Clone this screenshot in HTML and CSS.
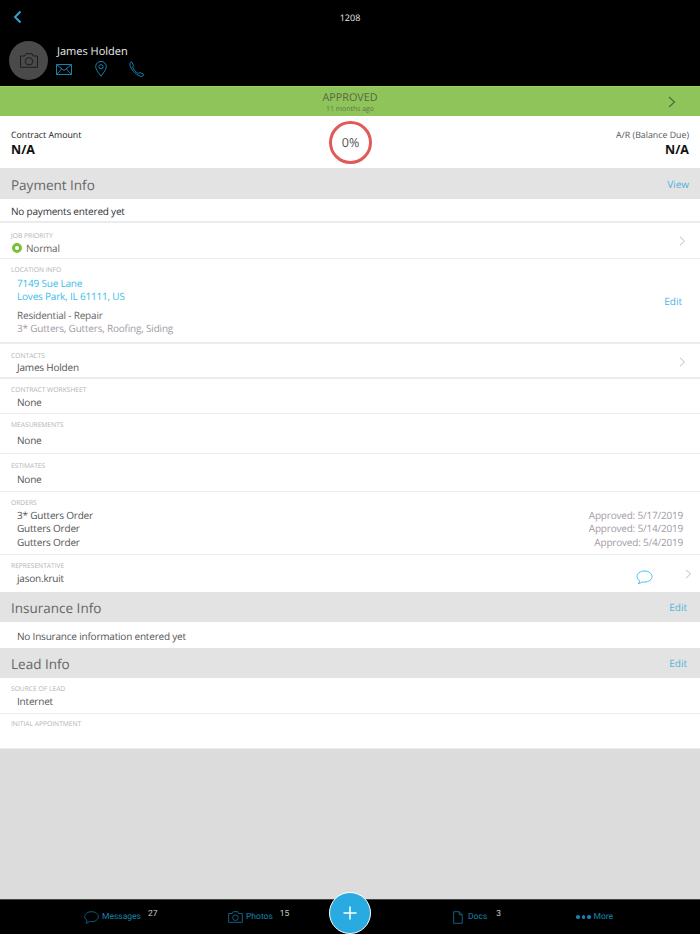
FILE: index.html
```html
<!DOCTYPE html>
<html lang="en">
<head>
<meta charset="utf-8">
<title>Job 1208</title>
<link rel="stylesheet" href="styles.css">
</head>
<body>
<div class="app">
  <header class="top">
    <div class="top-bar">
      <svg class="back" width="10" height="14" viewBox="0 0 10 14"><path d="M7.500 1.500 2 7l5.500 5.500" fill="none" stroke="#29abe2" stroke-width="1.800"/></svg>
      <span class="job-no">1208</span>
    </div>
    <div class="person">
      <div class="avatar">
        <svg width="20" height="15" viewBox="0 0 20 15"><path d="M1.500 3h4.200l1.300-2.300h6L14.300 3h4.200v11.300h-17z" fill="none" stroke="#1d1d1d" stroke-width="1"/><circle cx="10" cy="8.300" r="3.700" fill="none" stroke="#1d1d1d" stroke-width="1"/></svg>
      </div>
      <div class="person-info">
        <div class="person-name">James Holden</div>
        <div class="person-icons">
          <svg width="16" height="11" viewBox="0 0 16 11"><path d="M.5.500h15v10H.5zM.5.500 8 6.500l7.500-6M.5 10.500 5.800 4.800M15.500 10.500l-5.300-5.700" fill="none" stroke="#1b7fa8" stroke-width="1"/></svg>
          <svg width="12" height="16" viewBox="0 0 12 16"><path d="M6 15.300C3 11 .7 8.500.7 5.700a5.300 5.300 0 0 1 10.600 0C11.300 8.500 9 11 6 15.300z" fill="none" stroke="#1b7fa8" stroke-width="1"/><circle cx="6" cy="5.700" r="2.100" fill="none" stroke="#1b7fa8" stroke-width="1"/></svg>
          <svg width="16" height="16" viewBox="0 0 16 16"><path d="M2.500.700 4.600 4.500 3.600 6c.9 2.800 3 5 5.800 6.500l1.600-1 3.900 2-.9 1.300c-.6.700-1.700.8-3 .3C6 13 2 8.500.9 4 .6 2.800 1 1.600 2.500.700z" fill="none" stroke="#1b7fa8" stroke-width="1"/></svg>
        </div>
      </div>
    </div>
  </header>

  <section class="status">
    <div class="status-text">
      <div class="status-title">APPROVED</div>
      <div class="status-sub">11 months ago</div>
    </div>
    <svg class="status-chev" width="8" height="12" viewBox="0 0 8 12"><path d="M1 1l5.500 5L1 11" fill="none" stroke="#4f6b3a" stroke-width="1.200"/></svg>
  </section>

  <section class="summary">
    <div class="amount">
      <div class="amount-label">Contract Amount</div>
      <div class="amount-value">N/A</div>
    </div>
    <div class="ring">0%</div>
    <div class="amount amount-right">
      <div class="amount-label muted">A/R (Balance Due)</div>
      <div class="amount-value">N/A</div>
    </div>
  </section>

  <div class="band band-payment"><span class="band-title">Payment Info</span><a class="band-link">View</a></div>
  <div class="row row-nopay">No payments entered yet</div>

  <div class="row row-priority">
    <div class="label">JOB PRIORITY</div>
    <div class="priority"><span class="dot"></span>Normal</div>
    <svg class="chev" width="7" height="10" viewBox="0 0 7 10"><path d="M1 .8 5.500 5 1 9.200" fill="none" stroke="#bdbdbd" stroke-width="1"/></svg>
  </div>

  <div class="row row-location">
    <div class="label">LOCATION INFO</div>
    <div class="value value-link first">7149 Sue Lane</div>
    <div class="value value-link">Loves Park, IL 61111, US</div>
    <div class="value value-gap">Residential - Repair</div>
    <div class="value value-soft">3* Gutters, Gutters, Roofing, Siding</div>
    <a class="row-edit">Edit</a>
  </div>

  <div class="row row-contacts">
    <div class="label">CONTACTS</div>
    <div class="value">James Holden</div>
    <svg class="chev" width="7" height="10" viewBox="0 0 7 10"><path d="M1 .8 5.500 5 1 9.200" fill="none" stroke="#bdbdbd" stroke-width="1"/></svg>
  </div>

  <div class="row row-worksheet">
    <div class="label">CONTRACT WORKSHEET</div>
    <div class="value">None</div>
  </div>

  <div class="row row-measure">
    <div class="label">MEASUREMENTS</div>
    <div class="value">None</div>
  </div>

  <div class="row row-estimates">
    <div class="label">ESTIMATES</div>
    <div class="value">None</div>
  </div>

  <div class="row row-orders">
    <div class="label">ORDERS</div>
    <div class="order"><span class="value">3* Gutters Order</span><span class="order-date">Approved: 5/17/2019</span></div>
    <div class="order"><span class="value">Gutters Order</span><span class="order-date">Approved: 5/14/2019</span></div>
    <div class="order"><span class="value">Gutters Order</span><span class="order-date">Approved: 5/4/2019</span></div>
  </div>

  <div class="row row-rep">
    <div class="label">REPRESENTATIVE</div>
    <div class="value">jason.kruit</div>
    <svg class="rep-chat" width="17" height="15" viewBox="0 0 17 15"><path d="M8.500 1C4.300 1 1 3.400 1 6.500c0 1.700 1 3.200 2.600 4.200-.1 1-.6 2.300-1.300 3 1.500-.2 2.800-.8 3.800-1.800.8.200 1.600.2 2.400.2 4.200 0 7.500-2.500 7.500-5.600S12.700 1 8.500 1z" fill="none" stroke="#45bdea" stroke-width="1"/></svg>
    <svg class="chev chev-rep" width="7" height="10" viewBox="0 0 7 10"><path d="M1 .8 5.500 5 1 9.200" fill="none" stroke="#bdbdbd" stroke-width="1"/></svg>
  </div>

  <div class="band band-insurance"><span class="band-title">Insurance Info</span><a class="band-link link-edit">Edit</a></div>
  <div class="row row-noins"><span class="value">No Insurance information entered yet</span></div>

  <div class="band band-lead"><span class="band-title">Lead Info</span><a class="band-link link-edit">Edit</a></div>
  <div class="row row-source">
    <div class="label">SOURCE OF LEAD</div>
    <div class="value">Internet</div>
  </div>
  <div class="row row-appt">
    <div class="label">INITIAL APPOINTMENT</div>
  </div>

  <div class="filler"></div>

  <footer class="tabs">
    <div class="tab tab-messages">
      <svg width="15" height="13" viewBox="0 0 15 13"><path d="M7.500.700C3.700.700.700 2.900.700 5.600c0 1.500.9 2.800 2.300 3.700 0 1-.4 2.200-1 2.900 1.400-.2 2.500-.8 3.400-1.700.7.200 1.400.2 2.100.2 3.800 0 6.800-2.200 6.800-5.100S11.300.700 7.500.700z" fill="none" stroke="#135f82" stroke-width="1"/></svg>
      <span class="tab-label">Messages</span><sup class="tab-count">27</sup>
    </div>
    <div class="tab tab-photos">
      <svg width="15" height="12" viewBox="0 0 15 12"><path d="M.7 2.500h3.500l1-1.800h4.600l1 1.800h3.500v8.800H.7z" fill="none" stroke="#135f82" stroke-width="1"/><circle cx="7.500" cy="6.700" r="2.800" fill="none" stroke="#135f82" stroke-width="1"/></svg>
      <span class="tab-label">Photos</span><sup class="tab-count">15</sup>
    </div>
    <div class="tab tab-docs">
      <svg width="10" height="13" viewBox="0 0 10 13"><path d="M.7.700h5.500l3 3v8.600H.7zM6.200.700v3h3" fill="none" stroke="#135f82" stroke-width="1"/></svg>
      <span class="tab-label">Docs</span><sup class="tab-count">3</sup>
    </div>
    <div class="tab tab-more">
      <span class="dots"><i></i><i></i><i></i></span>
      <span class="tab-label">More</span>
    </div>
    <button class="fab" type="button" aria-label="Add">
      <svg width="14" height="14" viewBox="0 0 14 14"><path d="M7 .5v13M.5 7h13" stroke="#fff" stroke-width="1.500" fill="none"/></svg>
    </button>
  </footer>
</div>
</body>
</html>
```
FILE: styles.css
```css
* { box-sizing: border-box; }
html, body { margin: 0; padding: 0; }
body { font-family: "Open Sans", "Liberation Sans", sans-serif; color: #333; background: #dcdcdc; text-rendering: geometricPrecision; }
.app { width: 700px; height: 934px; display: flex; flex-direction: column; overflow: hidden; }

.top { height: 86px; background: #000; flex: none; }
.top-bar { height: 40px; display: flex; align-items: center; justify-content: center; position: relative; }
.back { position: absolute; left: 13px; top: 10px; }
.job-no { color: #e8e8e8; font-size: 9px; position: relative; top: -3px; }
.person { display: flex; padding-left: 9px; gap: 9px; }
.avatar { width: 39px; height: 39px; border-radius: 50%; background: #4a4a4a; display: flex; align-items: center; justify-content: center; margin-top: 1px; }
.person-info { padding-top: 4px; }
.person-name { color: #ececec; font-size: 11px; line-height: 16px; }
.person-icons { display: flex; align-items: center; height: 18px; margin-left: -1px; }
.person-icons svg:nth-child(1) { margin-right: 23px; }
.person-icons svg:nth-child(2) { margin-right: 22px; }

.status { height: 30px; flex: none; background: #8fc45a; border-top: 1px solid #9dd066; display: flex; justify-content: center; position: relative; }
.status-text { text-align: center; color: #56663f; padding-top: 4px; }
.status-title { font-size: 10.800px; line-height: 14px; }
.status-sub { font-size: 6.900px; line-height: 9px; color: #5e7446; }
.status-chev { position: absolute; right: 24px; top: 9px; }

.summary { height: 52px; flex: none; background: #fff; display: flex; align-items: center; justify-content: space-between; padding: 0 11px; position: relative; }
.amount { padding-top: 2px; }
.amount-label { font-size: 8.800px; line-height: 12px; color: #222; }
.amount-label.muted { color: #555; }
.amount-value { font-size: 12.500px; line-height: 17px; font-weight: 700; color: #111; }
.amount-right { text-align: right; }
.ring { position: absolute; left: 329px; top: 5px; width: 43px; height: 43px; border-radius: 50%; border: 3.500px solid #e05a5a; display: flex; align-items: center; justify-content: center; font-size: 12.500px; color: #555; }

.band { flex: none; background: #e3e3e3; display: flex; align-items: center; justify-content: space-between; padding: 0 11px; }
.band-payment { height: 31px; }
.band-insurance { height: 30px; }
.band-lead { height: 30px; }
.band-title { font-size: 13.500px; color: #666; position: relative; top: 1px; }
.band-link { font-size: 10px; color: #4fb3dd; }
.link-edit { margin-right: 2px; }

.row { flex: none; background: #fff; border-bottom: 1px solid #ececec; position: relative; padding-left: 11px; }
.label { font-size: 6.700px; line-height: 9px; color: #b4b4b4; }
.value { font-size: 10px; letter-spacing: -.2px; line-height: 13px; color: #555; padding-left: 6px; }

.row-nopay { height: 24px; font-size: 10px; letter-spacing: -.2px; line-height: 25px; color: #333; border-bottom-width: 2px; }
.row-priority { height: 36px; padding-top: 8px; }
.priority { display: flex; align-items: center; font-size: 10px; letter-spacing: -.2px; color: #666; line-height: 14px; margin-top: 1px; }
.dot { width: 10px; height: 10px; border-radius: 50%; border: 3px solid #7cbf3a; background: #fff; margin-right: 4px; margin-left: 1px; }
.chev { position: absolute; right: 14px; top: 13px; }

.row-location { height: 85px; padding-top: 6px; border-bottom-width: 2px; }
.value-link { color: #3cbde8; }
.value-link.first { margin-top: 3px; }
.value-gap { margin-top: 6px; color: #666; }
.value-soft { color: #a39aa5; }
.row-edit { position: absolute; right: 18px; top: 35px; font-size: 10px; color: #4fb3dd; }

.row-contacts { height: 35px; padding-top: 7px; border-bottom-width: 2px; }
.row-contacts .value { margin-top: 1px; }
.row-worksheet { height: 35px; padding-top: 6px; }
.row-worksheet .value { margin-top: 2px; }
.row-measure { height: 40px; padding-top: 6px; }
.row-measure .value { margin-top: 5px; }
.row-estimates { height: 38px; padding-top: 7px; }
.row-estimates .value { margin-top: 3px; }

.row-orders { height: 63px; padding-top: 6px; padding-right: 17px; }
.order { display: flex; justify-content: space-between; line-height: 13px; height: 13.300px; position: relative; top: 2px; }
.order-date { font-size: 10px; letter-spacing: -.2px; color: #a39aa5; }

.row-rep { height: 37px; padding-top: 6px; border-bottom: 0; }
.row-rep .value { margin-top: 2px; }
.rep-chat { position: absolute; left: 636px; top: 15px; }
.chev-rep { right: 8px; top: 14px; }

.row-noins { height: 26px; line-height: 25px; border-bottom: 0; }
.row-source { height: 36px; padding-top: 6px; }
.row-source .value { margin-top: 2px; }
.row-appt { height: 35px; padding-top: 5px; }

.filler { flex: 1; background: #dcdcdc; }

.tabs { flex: none; height: 35px; background: #000; border-top: 1px solid #444; position: relative; display: flex; }
.tab { position: absolute; top: 0; height: 34px; display: flex; align-items: center; gap: 3px; }
.tab-label { font-family: Roboto, "Liberation Sans", sans-serif; font-size: 8.500px; color: #1a81ad; }
.tab-count { font-family: Roboto, "Liberation Sans", sans-serif; font-size: 8.500px; color: #ccc; margin: 0 0 0 4px; position: relative; top: -3px; line-height: 1; }
.tab-messages { left: 84px; }
.tab-photos { left: 228px; }
.tab-docs { left: 453px; gap: 5px; }
.tab-more { left: 576px; }
.dots { display: flex; gap: 2px; }
.dots i { width: 3.500px; height: 3.500px; border-radius: 50%; background: #1a81ad; display: block; }
.fab { position: absolute; left: 329px; top: -8px; width: 42px; height: 42px; border-radius: 50%; background: #29abe2; border: 1px solid #fff; padding: 0; display: flex; align-items: center; justify-content: center; }
```
